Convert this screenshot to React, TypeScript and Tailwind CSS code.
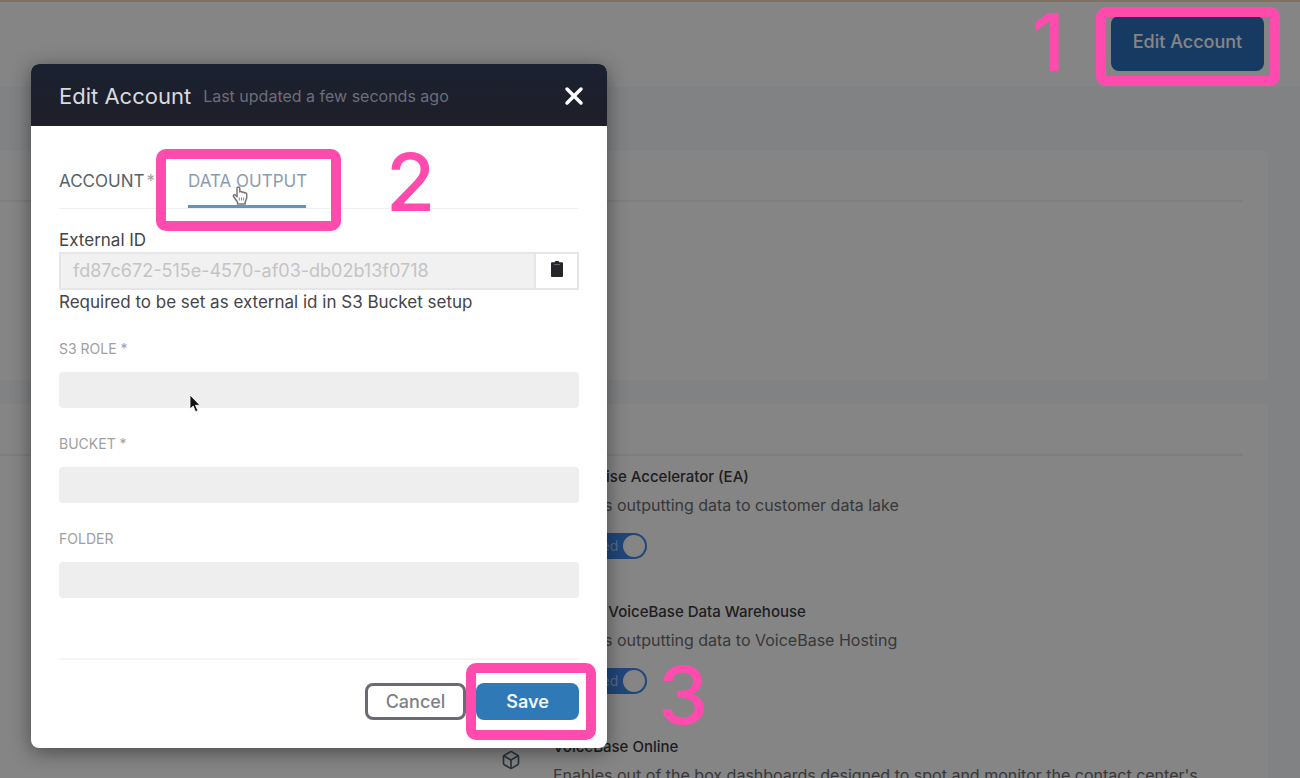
import { useState } from 'react';
import type { ReactNode } from 'react';
import { Box, X } from 'lucide-react';

type Feature = {
  id: string;
  title: string;
  description: string;
};

const features: Feature[] = [
  {
    id: 'accelerator',
    title: 'Enterprise Accelerator (EA)',
    description: 'Enables outputting data to customer data lake',
  },
  {
    id: 'warehouse',
    title: 'Hosted VoiceBase Data Warehouse',
    description: 'Enables outputting data to VoiceBase Hosting',
  },
  {
    id: 'online',
    title: 'VoiceBase Online',
    description:
      "Enables out of the box dashboards designed to spot and monitor the contact center's",
  },
];

function FeatureRow({ feature }: { feature: Feature }) {
  return (
    <li className="flex gap-8">
      <Box className="mt-[15px] size-5 shrink-0 text-[#4f6472]" strokeWidth={2} />
      <div className="flex flex-col items-start">
        <h3 className="mb-1 text-[15px] leading-6 font-medium whitespace-nowrap text-[#3a3a3e]">
          {feature.title}
        </h3>
        <p className="mb-4 text-base leading-6 whitespace-nowrap text-[#6c6c70]">
          {feature.description}
        </p>
        <label className="flex h-[26px] w-[94px] items-center justify-between rounded-full bg-[#3f86ea] pr-0.5 pl-3 text-sm text-[#a9c8f5]">
          <input type="checkbox" defaultChecked className="sr-only" />
          Enabled
          <span className="size-[22px] rounded-full bg-white"></span>
        </label>
      </div>
    </li>
  );
}

function AccountPage() {
  return (
    <div className="h-full overflow-hidden border-t-2 border-[#f3d7bb] bg-[#f7fafd]">
      <header className="flex h-[85px] items-start justify-end bg-white pt-3.5 pr-9">
        <button className="h-[55px] w-[153px] rounded-lg bg-[#2c70be] pb-1 text-lg font-medium text-white">
          Edit Account
        </button>
      </header>
      <main className="flex flex-col gap-6 pt-16 pr-8">
        <section className="h-[229px] rounded-r-md bg-white pr-[25px]">
          <div className="h-[51px] border-b-2 border-[#f2f2f2]"></div>
        </section>
        <section className="rounded-r-md bg-white pr-[25px]">
          <div className="h-[52px] border-b-2 border-[#f0f0f0]"></div>
          <ul className="flex flex-col gap-[41px] pt-[9px] pl-[501px]">
            {features.map((feature) => (
              <FeatureRow key={feature.id} feature={feature} />
            ))}
          </ul>
        </section>
      </main>
    </div>
  );
}

function Field({ id, label }: { id: string; label: string }) {
  return (
    <div className="flex flex-col gap-[13px]">
      <label htmlFor={id} className="text-sm leading-5 text-[#a0a0a0] uppercase">
        {label}
      </label>
      <input id={id} type="text" className="h-9 w-full rounded-sm bg-[#eeeeee] px-3 text-base outline-none" />
    </div>
  );
}

function Highlight({ className }: { className: string }) {
  return (
    <span
      className={`pointer-events-none absolute rounded-[10px] border-10 border-[#ff4bad] ${className}`}
    ></span>
  );
}

function Step({ className, children }: { className: string; children: ReactNode }) {
  return (
    <span
      className={`pointer-events-none absolute text-[80px] leading-[80px] font-medium text-[#ff4bad] ${className}`}
    >
      {children}
    </span>
  );
}

function ClipboardIcon() {
  return (
    <svg viewBox="0 0 14 18" className="h-[18px] w-3.5" fill="#26262a" aria-hidden="true">
      <path d="M4.5 2.2 5.6 1h2.8l1.1 1.2H12a1 1 0 0 1 1 1V16a1 1 0 0 1-1 1H2a1 1 0 0 1-1-1V3.200a1 1 0 0 1 1-1z" />
      <path d="M3.800 4.600h6.400" stroke="#77777b" strokeWidth="0.800" />
    </svg>
  );
}

function HandCursor() {
  return (
    <svg
      viewBox="0 0 16 20"
      className="pointer-events-none absolute top-[19px] left-[44px] h-5 w-4"
      fill="#ffffff"
      stroke="#77777b"
      strokeWidth="1.500"
      strokeLinejoin="round"
      aria-hidden="true"
    >
      <path d="M5 10V3.500a1.400 1.400 0 0 1 2.800 0V7c.5-.9 2.200-.7 2.400.4.600-.7 2-.5 2.200.6 1-.5 2.300.1 2.300 1.300v3.200c0 2-1.200 3.200-1.500 4.500v2H5.500v-1.800C4.500 15.500 2.700 13.500 1.500 11.500 1 10.200 2.500 9.200 3.500 10.200L5 11.800z" />
      <path d="M7.300 12.500v3M9.500 12.500v3M11.600 12.500v3" fill="none" strokeWidth="0.900" />
    </svg>
  );
}

function ArrowCursor() {
  return (
    <svg
      viewBox="0 0 12 19"
      className="pointer-events-none absolute top-[330px] left-[158px] h-[19px] w-3"
      fill="#111111"
      stroke="#ffffff"
      strokeWidth="0.800"
      aria-hidden="true"
    >
      <path d="M1 1v14l3.200-3 2.300 5.700 2.400-1-2.400-5.400H11z" />
    </svg>
  );
}

function EditAccountDialog() {
  const [tab, setTab] = useState('output');

  return (
    <div
      role="dialog"
      aria-labelledby="dialog-title"
      className="relative w-[576px] rounded-lg bg-white shadow-[0_4px_20px_rgba(0,0,0,0.45)]"
    >
      <header className="flex h-[62px] items-center rounded-t-lg bg-linear-to-b from-[#1a2130] to-[#1f1e29] pt-0.5 pr-[19px] pl-7">
        <h2 id="dialog-title" className="text-[22px] leading-7 text-[#d8dade]">
          Edit Account
        </h2>
        <p className="ml-3 text-base text-[#6c6e7a]">Last updated a few seconds ago</p>
        <button aria-label="Close" className="ml-auto text-white">
          <X className="size-7" strokeWidth={3} />
        </button>
      </header>

      <form className="px-7 pb-7" onSubmit={(e) => e.preventDefault()}>
        <div role="tablist" className="mt-10 flex gap-9 border-b border-[#f2f2f2]">
          <button
            type="button"
            role="tab"
            aria-selected={tab === 'account'}
            onClick={() => setTab('account')}
            className="h-[42px] w-[93px] pb-2.5 text-left text-[17px] whitespace-nowrap text-[#55646a]"
          >
            ACCOUNT<span className="ml-0.5 text-[#a0a0a0]">*</span>
          </button>
          <div className="relative">
            <button
              type="button"
              role="tab"
              aria-selected={tab === 'output'}
              onClick={() => setTab('output')}
              className="h-[42px] w-[118px] border-b-3 border-[#5b96c4] pb-[7px] text-left text-[17px] whitespace-nowrap text-[#8b9cb2]"
            >
              DATA OUTPUT
            </button>
            <HandCursor />
            <Highlight className="-top-[17px] -left-8 h-[82px] w-[185px]" />
            <Step className="-top-6 left-[198px]">2</Step>
          </div>
        </div>

        <label htmlFor="external-id" className="mt-[21px] block text-[17px] leading-5 text-[#44444a]">
          External ID
        </label>
        <div className="mt-0.5 flex h-[38px] border-2 border-[#e6e6e6]">
          <input
            id="external-id"
            type="text"
            readOnly
            value="fd87c672-515e-4570-af03-db02b13f0718"
            className="min-w-0 flex-1 bg-[#f1f1f1] px-3 text-lg text-[#c4c4c4] outline-none"
          />
          <button
            type="button"
            aria-label="Copy external ID"
            className="flex w-[43px] items-center justify-center border-l-2 border-[#e6e6e6] bg-white pb-1"
          >
            <ClipboardIcon />
          </button>
        </div>
        <p className="text-[17px] leading-6 text-[#44444a]">
          Required to be set as external id in S3 Bucket setup
        </p>

        <div className="mt-[25px] flex flex-col gap-[26px]">
          <Field id="role" label="S3 Role *" />
          <Field id="bucket" label="Bucket *" />
          <Field id="folder" label="Folder" />
        </div>

        <footer className="mt-[60px] flex justify-end gap-2.5 border-t-2 border-[#f4f4f4] pt-[23px]">
          <button
            type="button"
            className="h-[37px] w-[101px] rounded-lg border-3 border-[#6a6a72] bg-white text-lg leading-6 font-medium text-[#808086]"
          >
            Cancel
          </button>
          <div className="relative">
            <button
              type="submit"
              className="h-[37px] w-[103px] rounded-lg bg-[#2f79b7] text-lg leading-6 font-semibold text-[#eef4fa]"
            >
              Save
            </button>
            <Highlight className="-top-5 -left-2.5 h-[77px] w-[130px]" />
            <Step className="-top-7 left-[182px]">3</Step>
          </div>
        </footer>
      </form>
      <ArrowCursor />
    </div>
  );
}

export default function App() {
  return (
    <div className="relative h-screen overflow-hidden font-['Inter',sans-serif]">
      <AccountPage />
      <div className="absolute inset-0 bg-black/48 pt-16 pl-[31px]">
        <EditAccountDialog />
        <Highlight className="top-[7px] right-5 h-[79px] w-[184px]" />
        <Step className="top-0.5 right-[235px]">1</Step>
      </div>
    </div>
  );
}
